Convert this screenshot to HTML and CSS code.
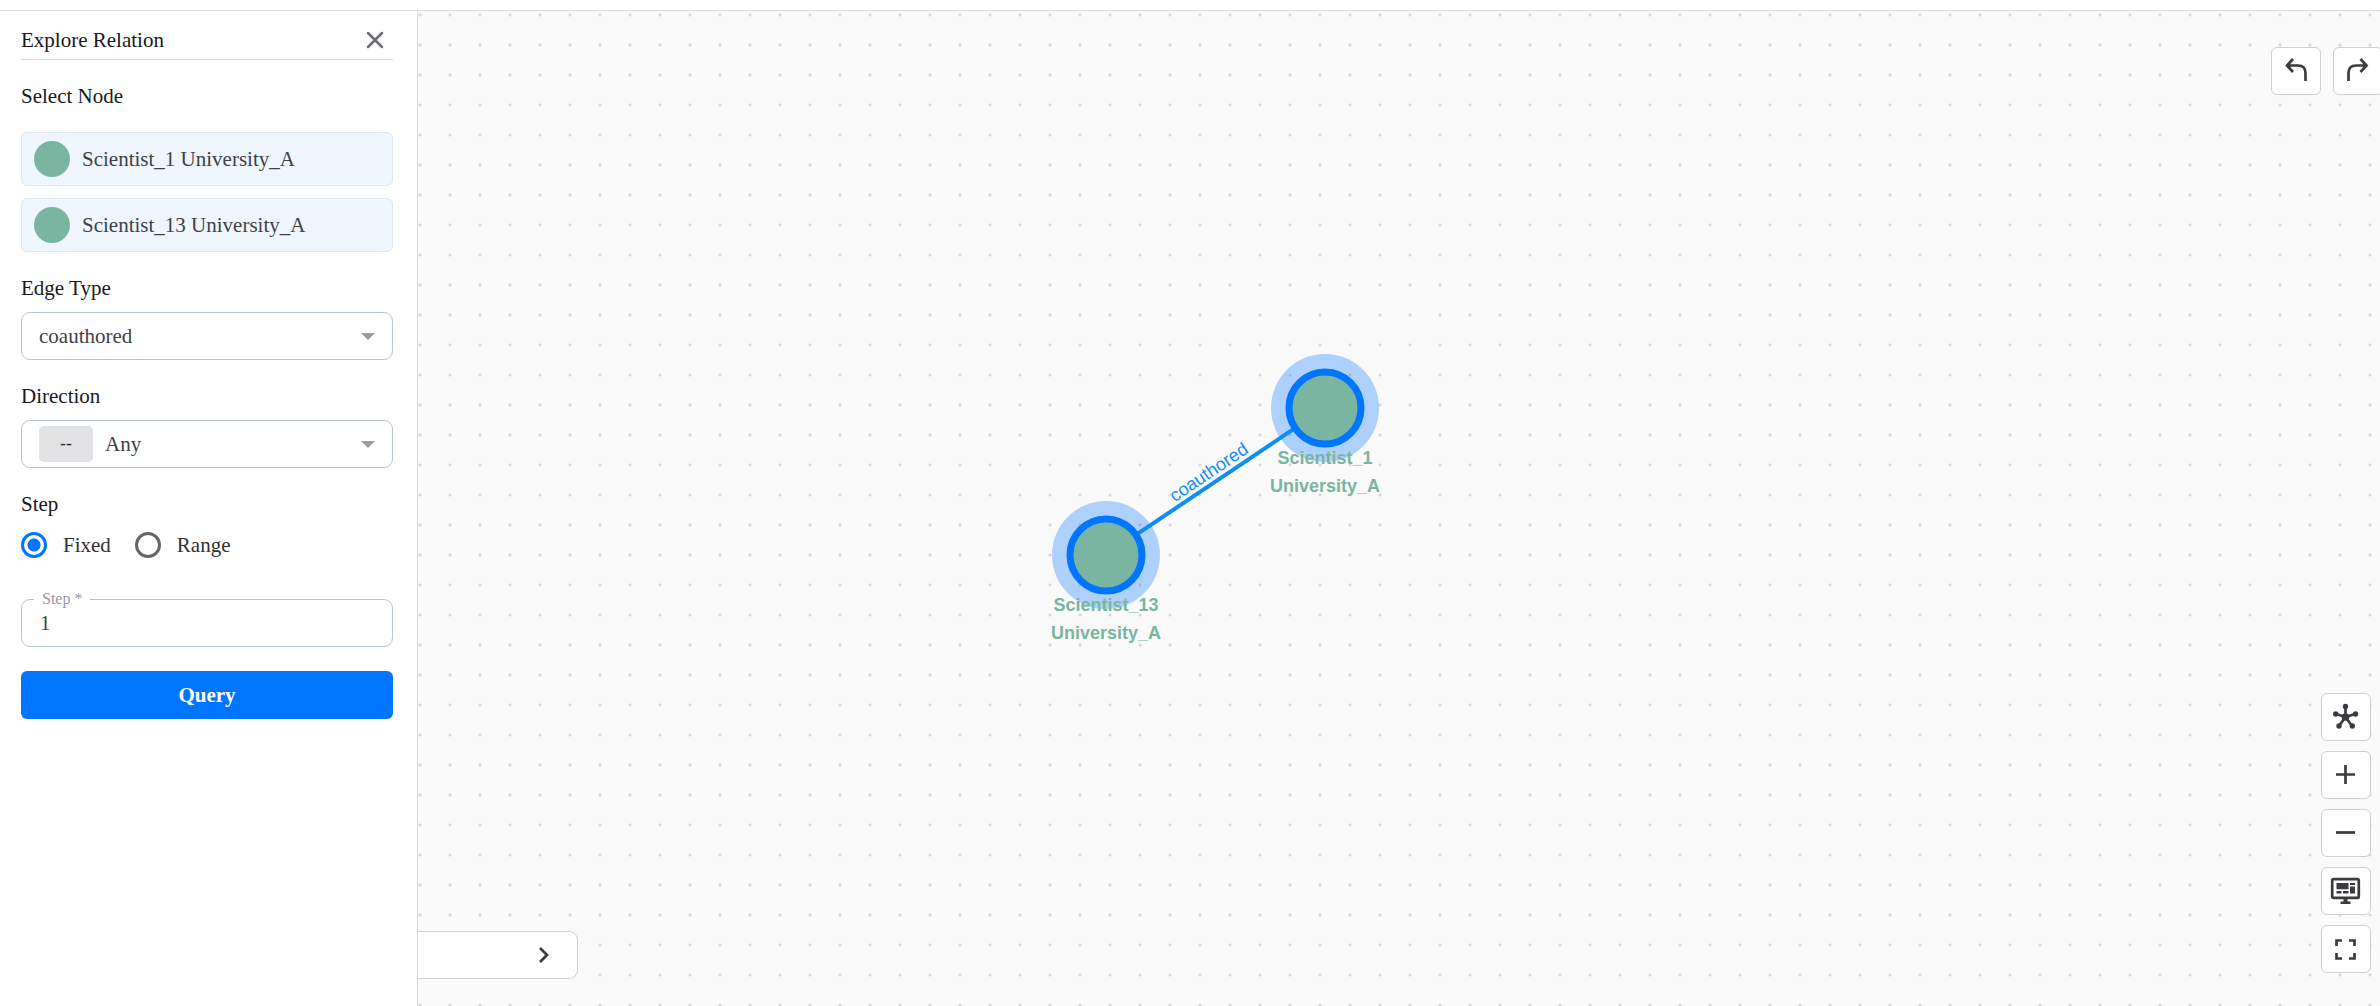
FILE: index.html
```html
<!DOCTYPE html>
<html lang="en">
<head>
<meta charset="utf-8">
<meta name="viewport" content="width=device-width, initial-scale=1">
<title>Explore Relation</title>
<link rel="stylesheet" href="styles.css">
</head>
<body>
<header class="topbar"></header>
<div class="workspace">
  <aside class="panel">
    <div class="panel-head">
      <h1 class="title">Explore Relation</h1>
      <button class="close" type="button" aria-label="Close">
        <svg width="18" height="18" viewBox="0 0 18 18"><path d="M2 2l14 14M16 2L2 16"/></svg>
      </button>
    </div>
    <form class="form">
      <h2 class="label select-node">Select Node</h2>
      <ul class="nodes">
        <li class="node-item"><span class="dot"></span>Scientist_1 University_A</li>
        <li class="node-item"><span class="dot"></span>Scientist_13 University_A</li>
      </ul>

      <label class="label" for="edge-type">Edge Type</label>
      <div class="box">
        <select id="edge-type" class="select"><option>coauthored</option></select>
        <svg class="caret" width="14" height="8" viewBox="0 0 14 8"><path d="M0 1h14L7 8z"/></svg>
      </div>

      <label class="label" for="direction">Direction</label>
      <div class="box">
        <span class="badge">--</span>
        <select id="direction" class="select"><option>Any</option></select>
        <svg class="caret" width="14" height="8" viewBox="0 0 14 8"><path d="M0 1h14L7 8z"/></svg>
      </div>

      <h2 class="label">Step</h2>
      <div class="radios">
        <label class="radio"><input type="radio" name="mode" checked>Fixed</label>
        <label class="radio"><input type="radio" name="mode">Range</label>
      </div>

      <div class="box step">
        <label class="floating" for="step">Step *</label>
        <input id="step" class="input" type="text" value="1" required>
      </div>
      <button class="query" type="button">Query</button>
    </form>
  </aside>

  <main class="canvas">
    <svg class="graph" aria-label="Relation graph">
      <circle class="halo" cx="907" cy="397" r="54"/>
      <circle class="halo" cx="688" cy="544" r="54"/>
      <line class="edge" x1="688" y1="544" x2="907" y2="397"/>
      <circle class="node" cx="907" cy="397" r="36"/>
      <circle class="node" cx="688" cy="544" r="36"/>
      <text class="edge-label" transform="translate(798 472) rotate(-34)" y="-7">coauthored</text>
      <text class="node-label" x="907" y="453">Scientist_1</text>
      <text class="node-label" x="907" y="481">University_A</text>
      <text class="node-label" x="688" y="600">Scientist_13</text>
      <text class="node-label" x="688" y="628">University_A</text>
    </svg>

    <div class="history">
      <button class="tool" type="button" aria-label="Undo">
        <svg class="icon" viewBox="0 0 36 36"><path d="M15 6l-6 6.500 6 6.500M9 12.500h11q7.500 0 7.500 7.500v8"/></svg>
      </button>
      <button class="tool" type="button" aria-label="Redo">
        <svg class="icon" viewBox="0 0 36 36"><path d="M20.500 6l6 6.500-6 6.500M26.500 12.500h-10.500q-7.500 0-7.500 7.500v8"/></svg>
      </button>
    </div>

    <div class="view-tools">
      <button class="tool" type="button" aria-label="Layout">
        <svg class="icon" viewBox="0 0 36 36">
          <path d="M17.500 18V7.500M17.500 18L8 15M17.500 18l9.500-3M17.500 18l-6.500 9M17.500 18l6.500 9"/>
          <g class="solid"><circle cx="17.500" cy="18" r="3.800"/><circle cx="17.500" cy="7.500" r="2.700"/><circle cx="7.700" cy="15" r="2.700"/><circle cx="27.500" cy="15" r="2.700"/><circle cx="11" cy="27" r="2.700"/><circle cx="24.300" cy="27" r="2.700"/></g>
        </svg>
      </button>
      <button class="tool" type="button" aria-label="Zoom in">
        <svg class="icon" viewBox="0 0 36 36"><path d="M8 17.500h19M17.500 8v19"/></svg>
      </button>
      <button class="tool" type="button" aria-label="Zoom out">
        <svg class="icon" viewBox="0 0 36 36"><path d="M8 17.500h19"/></svg>
      </button>
      <button class="tool" type="button" aria-label="Fit to screen">
        <svg class="icon" viewBox="0 0 36 36">
          <rect x="4.200" y="6.200" width="26.600" height="18.600" rx="1.500"/>
          <path class="solid" d="M8.500 10h12v6.300h-12zM22 10h5v2h-5zM22 13.500h5v7h-5zM8.500 18h5v2.500h-5zM15 18h5.500v2.500H15zM15.500 25h4v3.500h3V31h-10v-2.500h3z"/>
        </svg>
      </button>
      <button class="tool" type="button" aria-label="Full screen">
        <svg class="icon" viewBox="0 0 36 36"><path d="M8.500 15V9.500H14M21 9.500h5.500V15M26.500 22v5.500H21M14 27.500H8.500V22"/></svg>
      </button>
    </div>

    <div class="drawer">
      <button class="expand" type="button" aria-label="Expand">
        <svg class="icon" viewBox="0 0 36 36"><path d="M15 11l7 7-7 7"/></svg>
      </button>
    </div>
  </main>
</div>
</body>
</html>
```
FILE: styles.css
```css
* { box-sizing: border-box; }

body {
  margin: 0;
  height: 100vh;
  display: flex;
  flex-direction: column;
  overflow: hidden;
  background: #fff;
  color: #18191c;
  font: 21px/24px "Liberation Serif", serif;
}

button, input, select { font: inherit; margin: 0; }

.topbar {
  flex: none;
  height: 11px;
  border-bottom: 1px solid #dcdcde;
}

.workspace { flex: 1; min-height: 0; display: flex; }

.panel {
  flex: none;
  width: 418px;
  padding: 17px 24px 24px 21px;
  border-right: 1px solid #dcdcde;
  overflow-y: auto;
}

.panel-head {
  display: flex;
  align-items: center;
  justify-content: space-between;
  padding: 0 9px 7px 0;
  border-bottom: 1px solid #dcdcde;
}

.title, .label { display: block; margin: 0; font-size: 21px; font-weight: 400; }

.close {
  display: flex;
  padding: 0;
  border: 0;
  background: none;
}
.close svg { fill: none; stroke: #6b6b70; stroke-width: 2.500; stroke-linecap: round; }

.form { display: flex; flex-direction: column; }

.label { margin: 24px 0 12px; }
.select-node { margin-bottom: 24px; }

.nodes {
  display: flex;
  flex-direction: column;
  gap: 12px;
  margin: 0;
  padding: 0;
  list-style: none;
}
.node-item {
  display: flex;
  align-items: center;
  gap: 12px;
  height: 54px;
  padding: 0 12px;
  border: 1px solid #dfe7ef;
  border-radius: 6px;
  background: #eff6ff;
  color: #3f4146;
}
.dot { width: 36px; height: 36px; border-radius: 50%; background: #79b5a0; }

.box {
  position: relative;
  display: flex;
  align-items: center;
  gap: 12px;
  height: 48px;
  padding: 0 17px;
  border: 1px solid #b7c5d1;
  border-radius: 9px;
}
.select, .input {
  flex: 1;
  min-width: 0;
  padding: 0;
  border: 0;
  outline: 0;
  background: none;
  color: #3f4146;
  appearance: none;
}
.caret { fill: #9c9c9f; }
.badge {
  width: 54px;
  height: 36px;
  border-radius: 5px;
  background: #e3e3e6;
  color: #26272b;
  font: 18px/36px "Liberation Sans", sans-serif;
  text-align: center;
}

.radios { display: flex; gap: 24px; margin-top: 4px; color: #303134; }
.radio { display: flex; align-items: center; gap: 16px; }
.radio input {
  width: 26px;
  height: 26px;
  border: 3px solid #666;
  border-radius: 50%;
  appearance: none;
}
.radio input:checked {
  border-color: #0075ff;
  background: radial-gradient(circle, #0075ff 6px, #fff 7px);
}

.step { margin-top: 41px; padding-left: 18px; }
.floating {
  position: absolute;
  top: -13px;
  left: 12px;
  padding: 0 8px;
  background: #fff;
  color: #98999e;
  font-size: 16px;
}

.query {
  height: 48px;
  margin-top: 24px;
  padding: 0;
  border: 0;
  border-radius: 6px;
  background: #0075ff;
  color: #fff;
  font-weight: 700;
}

.canvas {
  position: relative;
  flex: 1;
  min-width: 0;
  overflow: hidden;
  background: #fafafa radial-gradient(circle at 2px 4px, #d8d8da 1px, transparent 2px) 0 0 / 30px 30px;
}

.graph { display: block; width: 100%; height: 100%; font-family: "Liberation Sans", sans-serif; font-size: 18px; text-anchor: middle; }
.halo { fill: #0075ff; fill-opacity: 0.3; }
.edge { stroke: #0f8df5; stroke-width: 4; }
.node { fill: #79b5a0; stroke: #0075ff; stroke-width: 7; }
.edge-label { fill: #0f8df5; }
.node-label { fill: #79b5a0; font-weight: 700; }

.tool {
  display: flex;
  align-items: center;
  justify-content: center;
  width: 50px;
  height: 48px;
  padding: 0;
  border: 1px solid #cfcfd1;
  border-radius: 6px;
  background: #fff;
}
.icon { flex: none; width: 36px; height: 36px; fill: none; stroke: #3b3b40; stroke-width: 2.700; }
.solid { fill: #3b3b40; stroke: none; }

/* The history buttons run slightly past the edge of the canvas. */
.history { position: absolute; top: 36px; right: -3px; display: flex; gap: 12px; }
.view-tools { position: absolute; right: 9px; bottom: 33px; display: flex; flex-direction: column; gap: 10px; }

.drawer {
  position: absolute;
  left: 0;
  bottom: 27px;
  display: flex;
  align-items: center;
  justify-content: flex-end;
  width: 160px;
  height: 48px;
  padding-right: 16px;
  border: 1px solid #cfcfd1;
  border-left: 0;
  border-radius: 0 9px 9px 0;
  background: #fff;
}
.expand { display: flex; padding: 0; border: 0; background: none; }
```
